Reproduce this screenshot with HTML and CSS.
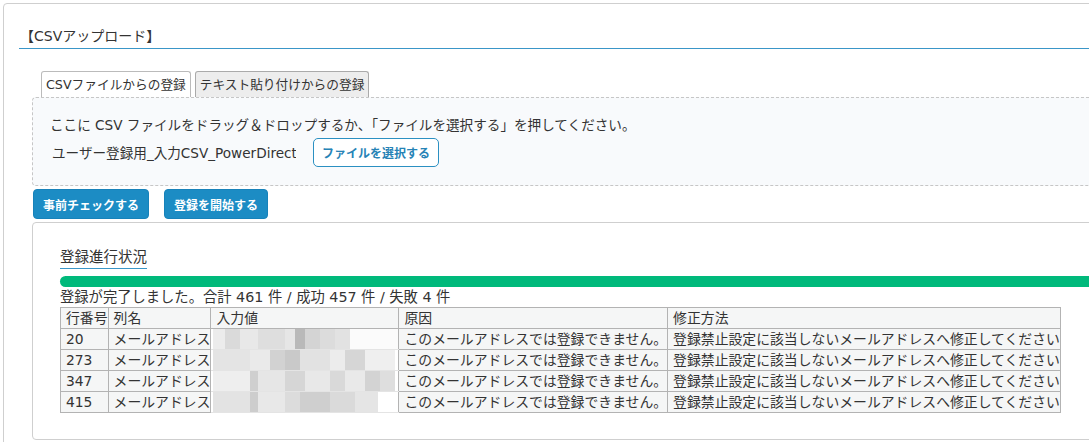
FILE: index.html
```html
<!DOCTYPE html>
<html>
<head>
  <meta charset="utf-8">
  <link rel="stylesheet" href="styles.css">
</head>
<body>
  <div class="card">
    <h2 class="card-title">【CSVアップロード】</h2>

    <div class="uploader">
      <ul class="tabs">
        <li class="tab active">CSVファイルからの登録</li>
        <li class="tab">テキスト貼り付けからの登録</li>
      </ul>

      <div class="dropzone">
        <p class="drop-hint">ここに CSV ファイルをドラッグ＆ドロップするか、「ファイルを選択する」を押してください。</p>
        <div class="file-row">
          <div class="file-name"><span>ユーザー登録用_入力CSV_PowerDirectory.csv</span></div>
          <button class="btn-outline">ファイルを選択する</button>
        </div>
      </div>

      <div class="actions">
        <button class="btn">事前チェックする</button>
        <button class="btn">登録を開始する</button>
      </div>

      <div class="progress-panel">
        <h3 class="panel-title">登録進行状況</h3>
        <div class="progress"></div>
        <p class="status">登録が完了しました。合計 461 件 / 成功 457 件 / 失敗 4 件</p>

        <table class="errors">
          <tr>
            <th>行番号</th>
            <th>列名</th>
            <th class="masked-col">入力値</th>
            <th>原因</th>
            <th>修正方法</th>
          </tr>
          <tr>
            <td>20</td>
            <td>メールアドレス</td>
            <td class="masked"><div class="mosaic m1"></div></td>
            <td>このメールアドレスでは登録できません。</td>
            <td>登録禁止設定に該当しないメールアドレスへ修正してください</td>
          </tr>
          <tr>
            <td>273</td>
            <td>メールアドレス</td>
            <td class="masked"><div class="mosaic m2"></div></td>
            <td>このメールアドレスでは登録できません。</td>
            <td>登録禁止設定に該当しないメールアドレスへ修正してください</td>
          </tr>
          <tr>
            <td>347</td>
            <td>メールアドレス</td>
            <td class="masked"><div class="mosaic m3"></div></td>
            <td>このメールアドレスでは登録できません。</td>
            <td>登録禁止設定に該当しないメールアドレスへ修正してください</td>
          </tr>
          <tr>
            <td>415</td>
            <td>メールアドレス</td>
            <td class="masked"><div class="mosaic m4"></div></td>
            <td>このメールアドレスでは登録できません。</td>
            <td>登録禁止設定に該当しないメールアドレスへ修正してください</td>
          </tr>
        </table>
      </div>
    </div>
  </div>
</body>
</html>
```

FILE: styles.css
```css
html,
body {
  margin: 0;
  overflow: hidden;
}

body {
  font-family: "DejaVu Sans", "Noto Sans CJK JP", sans-serif;
  color: #333;
  background-color: #fff;
}

.card {
  margin: 3px 0 0 3px;
  width: 1160px;
  border: 1px solid #cfcfcf;
  border-radius: 4px;
  padding: 22px 0 40px 15px;
}

.card-title {
  margin: 0;
  font-size: 14px;
  font-weight: normal;
  line-height: 20px;
  padding: 0 0 2px 1px;
  border-bottom: 1px solid #3a96c8;
}

.uploader {
  margin: 22px 0 0 13px;
  width: 1130px;
}

.tabs {
  display: flex;
  gap: 4px;
  list-style: none;
  margin: 0 0 0 9px;
  padding: 0;
}

.tab {
  font-size: 12.7px;
  line-height: 25px;
  padding: 0 4px;
  border: 1px solid #aaa;
  border-bottom: none;
  border-radius: 3px 3px 0 0;
  background-color: #ededed;
}

.tab.active {
  background-color: #fff;
  border-color: #bbb;
}

.dropzone {
  border: 1px dashed #c6c6c6;
  border-radius: 4px;
  background-color: #f8fafc;
  padding: 17px 18px 18px 17px;
}

.drop-hint {
  margin: 0;
  font-size: 13.6px;
  line-height: 20px;
}

.file-row {
  display: flex;
  align-items: center;
  gap: 17px;
  margin-top: 3px;
}

.file-name {
  flex: 0 0 244px;
  padding-left: 2px;
  font-size: 13.6px;
  line-height: 20px;
  white-space: nowrap;
  overflow: hidden;
}

.btn-outline {
  font-family: inherit;
  font-size: 12px;
  font-weight: bold;
  height: 29px;
  padding: 0 8px;
  color: #2683b6;
  background-color: #fff;
  border: 1px solid #2b90c2;
  border-radius: 5px;
}

.actions {
  display: flex;
  gap: 15px;
  margin: 3px 0 0 1px;
}

.btn {
  font-family: inherit;
  font-size: 12px;
  font-weight: bold;
  height: 30px;
  padding: 0 9px;
  color: #fff;
  background-color: #1c8cc4;
  border: 1px solid #1782ba;
  border-radius: 4px;
}

.progress-panel {
  margin-top: 3px;
  border: 1px solid #cfcfcf;
  border-radius: 4px;
  padding: 24px 0 26px 27px;
}

.panel-title {
  width: fit-content;
  margin: 0;
  font-size: 14.5px;
  font-weight: normal;
  line-height: 20px;
  padding-bottom: 1px;
  border-bottom: 1px solid #3a96c8;
}

.progress {
  margin-top: 7px;
  height: 11px;
  border-radius: 6px;
  background-color: #00b97b;
}

.status {
  margin: 0;
  font-size: 14.3px;
  line-height: 20px;
}

.errors {
  border-collapse: collapse;
  font-size: 13.85px;
  line-height: 20px;
}

.errors th,
.errors td {
  border: 1px solid #b3b3b3;
  padding: 0 0 0 5px;
  white-space: nowrap;
  text-align: left;
  font-weight: normal;
  background-color: #f5f6f6;
}

.errors th.masked-col {
  width: 182px;
}

.errors td.masked {
  padding: 0;
  background-color: #fff;
  border-top-color: #e4e4e4;
  border-bottom-color: #e4e4e4;
}

.mosaic {
  height: 20px;
}

.m1 {
  background: linear-gradient(90deg,
    #fff 0 2px, #ececec 2px 14px, #dadada 14px 29px, #e8e8e8 29px 47px,
    #dedede 47px 74px, #e6e6e6 74px 84px, #b9b9b9 84px 94px, #d4d4d4 94px 109px,
    #dcdcdc 109px 124px, #e2e2e2 124px 139px, #fbfbfb 139px 100%);
}

.m2 {
  background: linear-gradient(90deg,
    #fff 0 2px, #e4e4e4 2px 39px, #eaeaea 39px 59px, #d2d2d2 59px 74px,
    #c9c9c9 74px 89px, #e2e2e2 89px 119px, #ececec 119px 134px,
    #d6d6d6 134px 154px, #efefef 154px 184px, #fff 184px 100%);
}

.m3 {
  background: linear-gradient(90deg,
    #fff 0 2px, #eeeeee 2px 39px, #cfcfcf 39px 47px, #e6e6e6 47px 74px,
    #d6d6d6 74px 94px, #e8e8e8 94px 119px, #d9d9d9 119px 134px,
    #e9e9e9 134px 154px, #d3d3d3 154px 169px, #dedede 169px 184px, #fff 184px 100%);
}

.m4 {
  background: linear-gradient(90deg,
    #fff 0 2px, #e3e3e3 2px 39px, #cdcdcd 39px 47px, #e8e8e8 47px 74px,
    #dcdcdc 74px 89px, #cfcfcf 89px 119px, #dadada 119px 144px,
    #e5e5e5 144px 167px, #fff 167px 100%);
}
```
